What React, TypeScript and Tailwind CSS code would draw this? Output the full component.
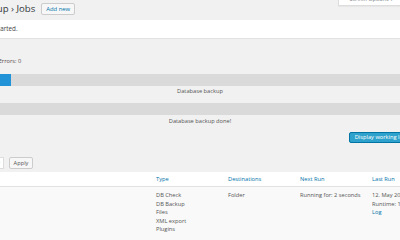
import React from "react";

export default function App() {
  const font = { fontFamily: '"Open Sans", "Noto Sans", sans-serif' };
  return (
    <div className="w-[400px] h-[240px] overflow-hidden bg-[#f1f1f1] text-[#555]" style={font}>
      <div className="flex h-[20px] items-start justify-between">
        <div className="flex items-center gap-[6px] pt-[3px]">
          <h1 className="-ml-[39px] text-[9.6px] leading-[12px] font-normal text-[#32373c] whitespace-nowrap">BackWPup › Jobs</h1>
          <button className="h-[12px] px-[4px] text-[5.9px] leading-[10px] border border-[#ccc] bg-[#f7f7f7] text-[#0073aa] rounded-[2px] whitespace-nowrap">Add new</button>
        </div>
        <div className="-mt-[6px] -mr-[4px] h-[12px] px-[10px] bg-white border border-t-0 border-[#ddd] shadow-[0_1px_1px_rgba(0,0,0,0.04)] text-[5.5px] leading-[11px] text-[#72777c] whitespace-nowrap">Screen Options ▾</div>
      </div>
      <div className="h-[18px] bg-white shadow-[0_1px_1px_rgba(0,0,0,0.06)] flex items-center text-[6.3px] text-[#444] whitespace-nowrap">
        <span className="-ml-[28px]">Job has started.</span>
      </div>
      <div className="h-[28px] flex items-end text-[5.7px] leading-[9px] whitespace-nowrap">
        <span className="-ml-[34px] text-[#5a4a4a]">Warnings: 0 Errors: 0</span>
      </div>
      <div className="-mx-[12px] mt-[8px]">
        <div className="h-[12px] bg-[#dadada]">
          <div className="h-full w-[23px] bg-[#2293d6]" />
        </div>
        <div className="h-[17px] text-center text-[5.7px] leading-[8px] pt-[0.5px]">Database backup</div>
        <div className="h-[12px] bg-[#dadada]" />
        <div className="h-[17px] text-center text-[5.7px] leading-[8px] pt-[1.5px]">Database backup done!</div>
        <div className="flex justify-end">
          <button className="h-[11px] px-[5px] bg-[#2ea2cc] border border-[#0074a2] text-white text-[5.7px] leading-[9px] rounded-[2px] whitespace-nowrap">Display working log</button>
        </div>
      </div>
      <div className="flex items-center gap-[5px] mt-[14px] h-[12px]">
        <div className="-ml-[60px] h-[12px] w-[64px] bg-white border border-[#ddd] text-[5.7px] leading-[10px] px-[2px] flex justify-between text-[#32373c]"><span>Bulk actions</span><span className="text-[5px]">▼</span></div>
        <button className="h-[12px] w-[24px] bg-[#f7f7f7] border border-[#ccc] text-[#555] text-[5.7px] leading-[10px] rounded-[2px]">Apply</button>
      </div>
      <div className="mt-[3px] -ml-[50px] w-[520px] text-[5.7px]">
        <div className="h-[15px] bg-white border-b border-[#e1e1e1] flex items-center text-[#0073aa]">
          <div className="w-[206px] pl-[20px]">Job Name</div>
          <div className="w-[72px]">Type</div>
          <div className="w-[72px]">Destinations</div>
          <div className="w-[72px]">Next Run</div>
          <div className="w-[72px]">Last Run</div>
        </div>
        <div className="h-[60px] bg-[#f9f9f9] flex pt-[4px] leading-[8.6px] text-[#555]">
          <div className="w-[206px]" />
          <div className="w-[72px] flex flex-col"><span>DB Check</span><span>DB Backup</span><span>Files</span><span>XML export</span><span>Plugins</span></div>
          <div className="w-[72px]">Folder</div>
          <div className="w-[72px] whitespace-nowrap">Running for: 2 seconds</div>
          <div className="w-[72px] flex flex-col whitespace-nowrap"><span>12. May 2015 11:20</span><span>Runtime: 1 seconds</span><span className="text-[#0073aa]">Log</span></div>
        </div>
      </div>
    </div>
  );
}
